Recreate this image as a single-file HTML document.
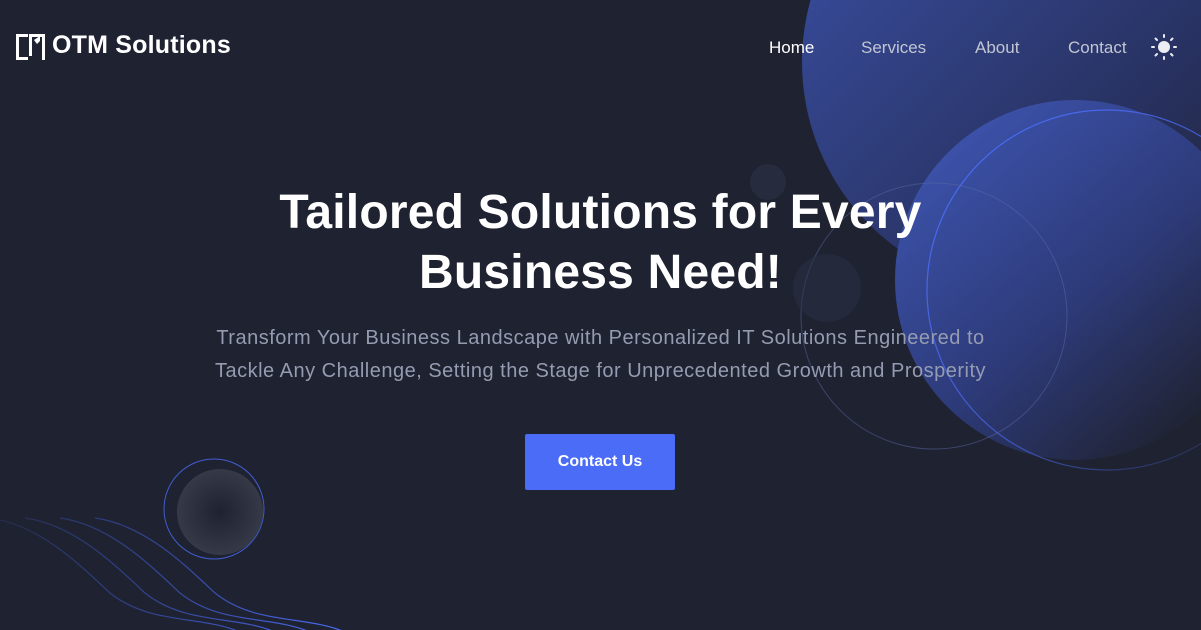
<!DOCTYPE html>
<html><head><meta charset="utf-8"><style>
*{margin:0;padding:0;box-sizing:border-box}
html,body{width:1201px;height:630px;overflow:hidden;background:#1f2230;font-family:"Liberation Sans",sans-serif}
.abs{position:absolute}
.nav a{position:absolute;top:38px;font-size:17px;color:#c2c6d3;text-decoration:none}
h1{position:absolute;left:0;width:1201px;top:183px;text-align:center;color:#fff;font-size:48px;line-height:60px;font-weight:700;letter-spacing:0.2px}
p.sub{position:absolute;left:0;width:1201px;top:322px;text-align:center;color:#959cb1;font-size:20px;line-height:33px;letter-spacing:0.5px}
.btn{position:absolute;left:525px;top:434px;width:150px;height:56px;background:#4a6cf7;color:#fff;font-weight:700;font-size:16px;text-align:center;line-height:56px;border-radius:2px}
</style></head><body>
<svg class="abs" style="left:0;top:0" width="1201" height="630">
<defs>
<linearGradient id="g1" x1="0" y1="0" x2="1" y2="1"><stop offset="0" stop-color="#3b51a8"/><stop offset="0.65" stop-color="#283262"/><stop offset="1" stop-color="#1f2230"/></linearGradient>
<linearGradient id="g2" x1="0.15" y1="0.1" x2="0.85" y2="0.9"><stop offset="0" stop-color="#3c52aa"/><stop offset="0.55" stop-color="#2d3a78"/><stop offset="1" stop-color="#1f2230"/></linearGradient>
<radialGradient id="g3"><stop offset="0" stop-color="#1f2230"/><stop offset="1" stop-color="#363a48"/></radialGradient>
<linearGradient id="g4" x1="0" y1="0" x2="1" y2="1"><stop offset="0" stop-color="#4a6cf7"/><stop offset="0.6" stop-color="#4a6cf7" stop-opacity="0.6"/><stop offset="1" stop-color="#4a6cf7" stop-opacity="0"/></linearGradient>
<linearGradient id="gw" gradientUnits="userSpaceOnUse" x1="0" y1="0" x2="340" y2="0"><stop offset="0" stop-color="#3b56c4" stop-opacity="0.2"/><stop offset="0.5" stop-color="#3b56c4" stop-opacity="0.7"/><stop offset="1" stop-color="#4a6cf7" stop-opacity="1"/></linearGradient>
</defs>
<circle cx="1032" cy="62" r="230" fill="url(#g1)"/>
<circle cx="1075" cy="280" r="180" fill="url(#g2)"/>
<circle cx="1107" cy="290" r="180" fill="none" stroke="url(#g4)" stroke-width="1.2"/>
<circle cx="934" cy="316" r="133" fill="none" stroke="#5a6aa8" stroke-opacity="0.5" stroke-width="1"/>
<circle cx="768" cy="182" r="18" fill="#2a3045" opacity="0.7"/>
<circle cx="827" cy="288" r="34" fill="#2a3045" opacity="0.5"/>
<circle cx="214" cy="509" r="50" fill="none" stroke="#4a6cf7" stroke-opacity="0.8" stroke-width="1"/>
<circle cx="220" cy="512" r="43" fill="url(#g3)"/>
<g fill="none" stroke="url(#gw)" stroke-width="1.2">
<path d="M-10 518 C40 525 80 565 110 593 C150 625 200 615 240 632"/>
<path d="M25 518 C75 525 115 565 145 593 C185 625 235 615 275 632"/>
<path d="M60 518 C110 525 150 565 180 593 C220 625 270 615 310 632"/>
<path d="M95 518 C145 525 185 565 215 593 C255 625 305 615 345 632"/>
</g>
<g fill="#fff">
<rect x="16" y="34" width="12" height="3"/><rect x="16" y="34" width="3" height="26"/><rect x="16" y="57" width="12" height="3"/>
<rect x="31" y="34" width="14" height="3"/><rect x="42" y="34" width="3" height="26"/><rect x="29" y="34" width="3" height="22"/>
<path d="M34 40 L40 36 L40 41 L37 44Z"/>
</g>
<g stroke="#eceef3" stroke-width="2" stroke-linecap="round">
<line x1="1164" y1="35" x2="1164" y2="37"/><line x1="1164" y1="57" x2="1164" y2="59"/>
<line x1="1152" y1="47" x2="1154" y2="47"/><line x1="1174" y1="47" x2="1176" y2="47"/>
<line x1="1155.5" y1="38.5" x2="1157" y2="40"/><line x1="1171" y1="54" x2="1172.5" y2="55.5"/>
<line x1="1172.5" y1="38.5" x2="1171" y2="40"/><line x1="1157" y1="54" x2="1155.5" y2="55.5"/>
</g>
<circle cx="1164" cy="47" r="6" fill="#eceef3"/>
</svg>
<div class="abs" style="left:52px;top:31px;color:#fff;font-weight:700;font-size:25px;letter-spacing:0.2px">OTM Solutions</div>
<div class="nav">
<a style="left:769px;color:#fff">Home</a>
<a style="left:861px">Services</a>
<a style="left:975px">About</a>
<a style="left:1068px">Contact</a>
</div>
<h1>Tailored Solutions for Every<br>Business Need!</h1>
<p class="sub">Transform Your Business Landscape with Personalized IT Solutions Engineered to<br>Tackle Any Challenge, Setting the Stage for Unprecedented Growth and Prosperity</p>
<div class="btn">Contact Us</div>
</body></html>
